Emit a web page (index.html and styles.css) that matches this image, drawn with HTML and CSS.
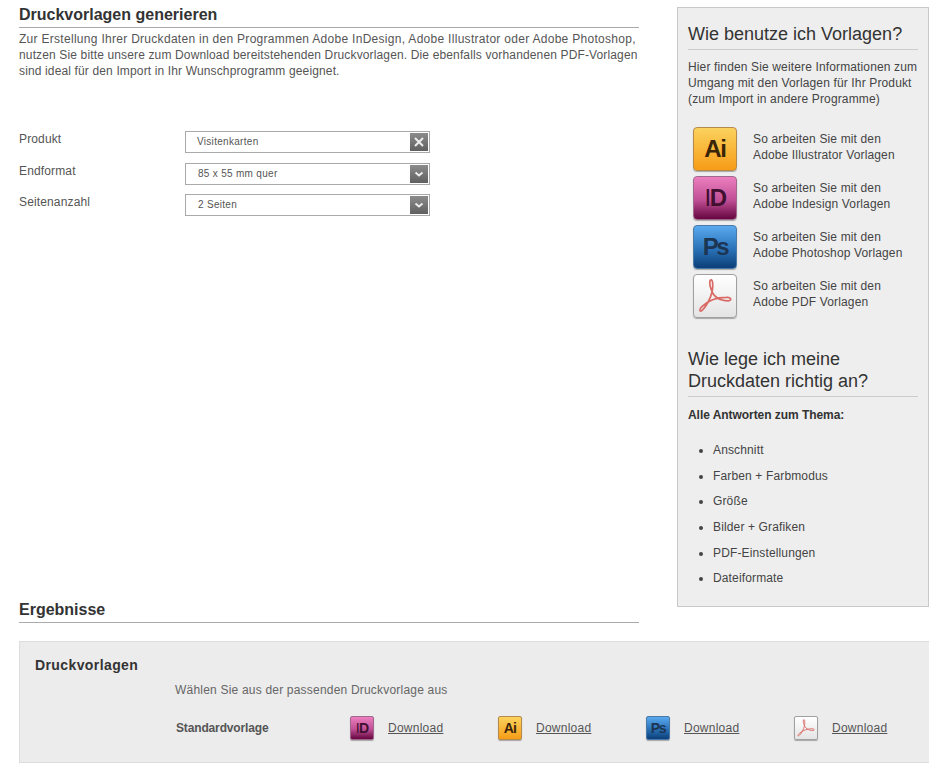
FILE: index.html
```html
<!DOCTYPE html>
<html lang="de">
<head>
    <meta charset="UTF-8">
    <title>Druckvorlagen generieren</title>
    <link rel="stylesheet" href="styles.css">
</head>
<body>
    <svg class="defs" width="0" height="0">
        <symbol id="acrobat" viewBox="0 0 44 44">
            <path d="M18 5c-2 0-2 5 0 10 2 7 8 12 18 12 4 0 3-4-2-3.500-9 0-19 3-26 10-3 3-2 5 0 4 4-3 9-12 11-20 1-5 1-12-1-12.500z"/>
        </symbol>
    </svg>

    <div class="top">
        <div class="main">
            <h2 class="section-title">Druckvorlagen generieren</h2>
            <p class="intro"><span class="intro-first">Zur Erstellung Ihrer Druckdaten in den Programmen Adobe InDesign, Adobe Illustrator oder Adobe Photoshop,</span><br>nutzen Sie bitte unsere zum Download bereitstehenden Druckvorlagen. Die ebenfalls vorhandenen PDF-Vorlagen<br>sind ideal für den Import in Ihr Wunschprogramm geeignet.</p>

            <div class="form">
                <div class="form-row">
                    <label>Produkt</label>
                    <div class="select">
                        <span class="select-value first">Visitenkarten</span>
                        <span class="select-btn">
                            <svg width="10" height="10" viewBox="0 0 10 10"><path d="M1 1l8 8M9 1l-8 8"/></svg>
                        </span>
                    </div>
                </div>
                <div class="form-row">
                    <label>Endformat</label>
                    <div class="select">
                        <span class="select-value">85 x 55 mm quer</span>
                        <span class="select-btn">
                            <svg width="10" height="10" viewBox="0 0 10 10"><path d="M1.500 3.500l3.500 3 3.500-3"/></svg>
                        </span>
                    </div>
                </div>
                <div class="form-row">
                    <label>Seitenanzahl</label>
                    <div class="select">
                        <span class="select-value">2 Seiten</span>
                        <span class="select-btn">
                            <svg width="10" height="10" viewBox="0 0 10 10"><path d="M1.500 3.500l3.500 3 3.500-3"/></svg>
                        </span>
                    </div>
                </div>
            </div>

            <h2 class="section-title">Ergebnisse</h2>
        </div>

        <div class="sidebar">
            <h3>Wie benutze ich Vorlagen?</h3>
            <p class="sidebar-text">Hier finden Sie weitere Informationen zum<br>Umgang mit den Vorlagen für Ihr Produkt<br>(zum Import in andere Programme)</p>

            <div class="guide">
                <span class="app-icon ai">Ai</span>
                <span class="guide-text">So arbeiten Sie mit den<br>Adobe Illustrator Vorlagen</span>
            </div>
            <div class="guide">
                <span class="app-icon id"><span class="thin">I</span>D</span>
                <span class="guide-text">So arbeiten Sie mit den<br>Adobe Indesign Vorlagen</span>
            </div>
            <div class="guide">
                <span class="app-icon ps">Ps</span>
                <span class="guide-text">So arbeiten Sie mit den<br>Adobe Photoshop Vorlagen</span>
            </div>
            <div class="guide">
                <span class="app-icon pdf"><svg><use href="#acrobat"/></svg></span>
                <span class="guide-text">So arbeiten Sie mit den<br>Adobe PDF Vorlagen</span>
            </div>

            <h3 class="second">Wie lege ich meine Druckdaten richtig an?</h3>
            <p class="sidebar-lead">Alle Antworten zum Thema:</p>
            <ul class="topics">
                <li>Anschnitt</li>
                <li>Farben + Farbmodus</li>
                <li>Größe</li>
                <li>Bilder + Grafiken</li>
                <li>PDF-Einstellungen</li>
                <li>Dateiformate</li>
            </ul>
        </div>
    </div>

    <div class="results">
        <h4>Druckvorlagen</h4>
        <p class="results-hint">Wählen Sie aus der passenden Druckvorlage aus</p>
        <div class="downloads">
            <strong>Standardvorlage</strong>
            <div class="download"><span class="app-icon small id"><span class="thin">I</span>D</span><a href="#">Download</a></div>
            <div class="download"><span class="app-icon small ai">Ai</span><a href="#">Download</a></div>
            <div class="download"><span class="app-icon small ps">Ps</span><a href="#">Download</a></div>
            <div class="download"><span class="app-icon small pdf"><svg><use href="#acrobat"/></svg></span><a href="#">Download</a></div>
        </div>
    </div>
</body>
</html>
```

FILE: styles.css
```css
* {
    margin: 0;
    padding: 0;
    box-sizing: border-box;
}

body {
    font-family: "Liberation Sans", Arial, sans-serif;
    font-size: 12px;
    line-height: 16px;
    letter-spacing: 0.14px;
    color: #555;
    background: #fff;
    padding-left: 19px;
    width: 929px;
}

.defs {
    position: absolute;
}

.top {
    display: flex;
    gap: 38px;
    align-items: flex-start;
}

.main {
    width: 620px;
    padding-top: 6px;
}

.section-title {
    font-size: 16px;
    line-height: 18px;
    letter-spacing: 0;
    color: #333;
    padding-bottom: 3px;
    border-bottom: 1px solid #aaa;
}

.intro {
    margin-top: 3px;
    height: 101px;
    white-space: nowrap;
}

.intro-first {
    letter-spacing: 0.29px;
}

.form {
    height: 469px;
}

.form-row {
    display: flex;
    height: 31.500px;
}

.form-row label {
    width: 166px;
    line-height: 15px;
}

.select {
    display: flex;
    justify-content: space-between;
    width: 245px;
    height: 22px;
    margin-top: -1px;
    padding: 1px;
    border: 1px solid #aaa;
    background: #fff;
    font-size: 10px;
    line-height: 18px;
    letter-spacing: 0.3px;
}

.select-value {
    padding-left: 11px;
}

.select-value.first {
    padding-left: 10px;
}

.select-btn {
    display: flex;
    align-items: center;
    justify-content: center;
    width: 18px;
    height: 18px;
    background: linear-gradient(#8c8c8c, #606060);
}

.select-btn svg path {
    fill: none;
    stroke: #eee;
    stroke-width: 2;
}

.sidebar {
    width: 252px;
    height: 600px;
    margin-top: 7px;
    padding: 15px 10px 0;
    background: #eee;
    border: 1px solid #c8c8c8;
    color: #444;
}

.sidebar h3 {
    font-size: 18px;
    font-weight: normal;
    line-height: 22px;
    letter-spacing: 0;
    color: #333;
    padding-bottom: 4px;
    border-bottom: 1px solid #ccc;
}

.sidebar h3.second {
    margin-top: 28px;
}

.sidebar-text {
    margin-top: 9px;
    margin-bottom: 17px;
}

.sidebar-lead {
    margin-top: 10px;
    font-weight: bold;
    letter-spacing: -0.05px;
    color: #333;
}

.guide {
    display: flex;
    align-items: center;
    gap: 16px;
    height: 49px;
    padding-left: 5px;
}

.guide-text {
    padding-bottom: 4px;
}

.app-icon {
    display: flex;
    flex: none;
    align-items: center;
    justify-content: center;
    width: 44px;
    height: 44px;
    border: 1px solid;
    border-radius: 4px;
    font-size: 24px;
    font-weight: bold;
    line-height: 1;
    letter-spacing: 0;
    box-shadow: 0 1px 1px rgba(0, 0, 0, 0.3);
}

.app-icon.small {
    width: 24px;
    height: 24px;
    border-radius: 2px;
    font-size: 14px;
}

.app-icon svg {
    width: 100%;
    height: 100%;
    fill: none;
    stroke: #d96a66;
    stroke-width: 1.800;
}

.app-icon .thin {
    font-weight: normal;
}

.app-icon.ai {
    color: #3a2408;
    border-color: #b68a4a;
    background: linear-gradient(#fbd25e, #f79c17);
    letter-spacing: -0.05em;
}

.app-icon.id {
    color: #3f1030;
    border-color: #a0688c;
    background: linear-gradient(#ec7fbf, #c04f95 55%, #66063f);
    letter-spacing: -0.06em;
}

.app-icon.ps {
    color: #1c3553;
    border-color: #4a7aa8;
    background: linear-gradient(#5aa9ee, #2a72b8 55%, #0c3f78);
    letter-spacing: -0.1em;
}

.app-icon.pdf {
    border-color: #a0a0a0;
    background: linear-gradient(#fff, #e4e4e4);
}

.topics {
    margin-top: 19px;
    padding-left: 25px;
}

.topics li {
    height: 25.700px;
}

.results {
    height: 122px;
    margin-top: 18px;
    padding: 15px 15px 0;
    background: #ececec;
    border: 1px solid #ddd;
    border-right: 0;
}

.results h4 {
    font-size: 14px;
    line-height: 17px;
    letter-spacing: 0.4px;
    color: #333;
}

.results-hint {
    margin-top: 8px;
    padding-left: 140px;
    letter-spacing: 0.2px;
    color: #666;
}

.downloads {
    display: grid;
    grid-template-columns: 174px repeat(3, 148px) auto;
    align-items: center;
    margin-top: 18px;
    padding-left: 141px;
    color: #555;
}

.downloads strong {
    letter-spacing: -0.15px;
}

.download {
    display: flex;
    align-items: center;
    gap: 14px;
}

.download a {
    color: #555;
    letter-spacing: 0.25px;
}
```
